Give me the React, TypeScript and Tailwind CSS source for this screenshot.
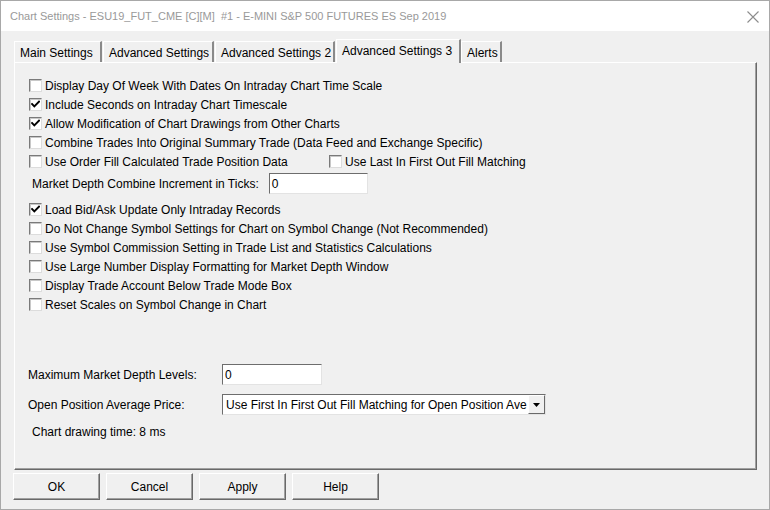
import React from 'react';

const font = { fontFamily: '"Liberation Sans", Arial, sans-serif' };

type Opt = { label: string; checked?: boolean };

const topOptions: Opt[] = [
  { label: 'Display Day Of Week With Dates On Intraday Chart Time Scale' },
  { label: 'Include Seconds on Intraday Chart Timescale', checked: true },
  { label: 'Allow Modification of Chart Drawings from Other Charts', checked: true },
  { label: 'Combine Trades Into Original Summary Trade (Data Feed and Exchange Specific)' },
];

const lowerOptions: Opt[] = [
  { label: 'Load Bid/Ask Update Only Intraday Records', checked: true },
  { label: 'Do Not Change Symbol Settings for Chart on Symbol Change (Not Recommended)' },
  { label: 'Use Symbol Commission Setting in Trade List and Statistics Calculations' },
  { label: 'Use Large Number Display Formatting for Market Depth Window' },
  { label: 'Display Trade Account Below Trade Mode Box' },
  { label: 'Reset Scales on Symbol Change in Chart' },
];

function CheckBox({ checked }: { checked?: boolean }) {
  return (
    <span className="w-[13px] h-[13px] shrink-0 bg-white border border-t-[#7a7a7a] border-l-[#7a7a7a] border-r-[#dcdcdc] border-b-[#dcdcdc] shadow-[inset_1px_1px_0_#c8c8c8] flex items-center justify-center">
      {checked && (
        <svg width="9" height="9" viewBox="0 0 9 9">
          <path d="M1 4 L3.3 6.3 L8 1.6" fill="none" stroke="#000" strokeWidth="1.9" strokeLinecap="square" />
        </svg>
      )}
    </span>
  );
}

function CheckRow({ label, checked }: Opt) {
  return (
    <div className="flex items-center h-[19px] gap-[3px]">
      <CheckBox checked={checked} />
      <span className="whitespace-nowrap">{label}</span>
    </div>
  );
}

function Field({ value, width }: { value: string; width: string }) {
  return (
    <div
      className={`${width} h-[21px] bg-white border border-t-[#6d6d6d] border-l-[#6d6d6d] border-r-[#e3e3e3] border-b-[#e3e3e3] flex items-center pl-[2px]`}
    >
      {value}
    </div>
  );
}

function Tab({ label, width }: { label: string; width: string }) {
  return (
    <div
      className={`${width} h-[21px] mr-[1px] border-t border-l border-t-white border-l-white border-r-2 border-r-[#8a8a8a] flex items-center pl-[5px] pt-[1px] whitespace-nowrap bg-[#f0f0f0]`}
    >
      {label}
    </div>
  );
}

function Button({ label }: { label: string }) {
  return (
    <div className="w-[87px] h-[27px] flex items-center justify-center border border-t-white border-l-white border-r-[#696969] border-b-[#696969] shadow-[inset_-1px_-1px_0_#a0a0a0] bg-[#f0f0f0]">
      {label}
    </div>
  );
}

export default function App() {
  return (
    <div
      className="w-[770px] h-[510px] bg-[#f0f0f0] border border-[#a8a8a8] text-[12px] text-black overflow-hidden"
      style={font}
    >
      {/* title bar */}
      <div className="h-[30px] bg-white flex items-center justify-between pl-[9px] pr-[10px] pt-[1px]">
        <span className="text-[11px] text-[#999999] whitespace-nowrap">
          Chart Settings - ESU19_FUT_CME [C][M]&nbsp; #1 - E-MINI S&amp;P 500 FUTURES ES Sep 2019
        </span>
        <svg width="12" height="12" viewBox="0 0 12 12">
          <path d="M0.5 0.5 L11.5 11.5 M11.5 0.5 L0.5 11.5" stroke="#8c8c8c" strokeWidth="1.1" />
        </svg>
      </div>

      <div className="pl-[13px] pr-[12px] pt-[7px]">
        {/* tab strip */}
        <div className="flex items-end h-[24px] relative z-10">
          <Tab label="Main Settings" width="w-[88px]" />
          <Tab label="Advanced Settings" width="w-[111px]" />
          <Tab label="Advanced Settings 2" width="w-[120px]" />
          <div className="w-[125px] h-[24px] mb-[-1px] border-t border-l border-t-white border-l-white border-r-2 border-r-[#8a8a8a] bg-[#f0f0f0] flex items-start pt-[2px] pl-[5px] whitespace-nowrap">
            Advanced Settings 3
          </div>
          <Tab label="Alerts" width="w-[41px]" />
        </div>

        {/* page body */}
        <div className="w-[743px] h-[408px] border border-t-white border-l-white border-r-[#696969] border-b-[#696969] shadow-[inset_-1px_-1px_0_#a0a0a0] px-[14px] pt-[13px]">
          {topOptions.map((o) => (
            <CheckRow key={o.label} {...o} />
          ))}
          <div className="flex items-center h-[19px]">
            <div className="w-[300px]">
              <CheckRow label="Use Order Fill Calculated Trade Position Data" />
            </div>
            <CheckRow label="Use Last In First Out Fill Matching" />
          </div>

          <div className="flex items-center h-[21px] mt-[2px] pl-[3px] gap-[10px]">
            <span className="whitespace-nowrap">Market Depth Combine Increment in Ticks:</span>
            <Field value="0" width="w-[99px]" />
          </div>

          <div className="mt-[6px]">
            {lowerOptions.map((o) => (
              <CheckRow key={o.label} {...o} />
            ))}
          </div>

          <div className="mt-[50px] flex items-center h-[21px]">
            <span className="w-[194px] -ml-[1px]">Maximum Market Depth Levels:</span>
            <Field value="0" width="w-[100px]" />
          </div>

          <div className="mt-[9px] flex items-center h-[21px]">
            <span className="w-[194px] -ml-[1px]">Open Position Average Price:</span>
            <div className="w-[324px] h-[21px] bg-white border border-t-[#6d6d6d] border-l-[#6d6d6d] border-r-[#e3e3e3] border-b-[#e3e3e3] flex items-center">
              <span className="flex-1 pl-[3px] whitespace-nowrap overflow-hidden">
                Use First In First Out Fill Matching for Open Position Ave
              </span>
              <div className="w-[17px] h-[19px] shrink-0 border border-t-white border-l-white border-r-[#696969] border-b-[#696969] bg-[#f0f0f0] flex items-center justify-center">
                <svg width="7" height="4" viewBox="0 0 7 4">
                  <path d="M0 0 H7 L3.5 4 Z" fill="#000" />
                </svg>
              </div>
            </div>
          </div>

          <div className="mt-[9px] h-[16px] pl-[3px] flex items-center">Chart drawing time: 8 ms</div>
        </div>

        {/* dialog buttons */}
        <div className="flex gap-[6px] mt-[3px] -ml-[1px]">
          <Button label="OK" />
          <Button label="Cancel" />
          <Button label="Apply" />
          <Button label="Help" />
        </div>
      </div>
    </div>
  );
}
